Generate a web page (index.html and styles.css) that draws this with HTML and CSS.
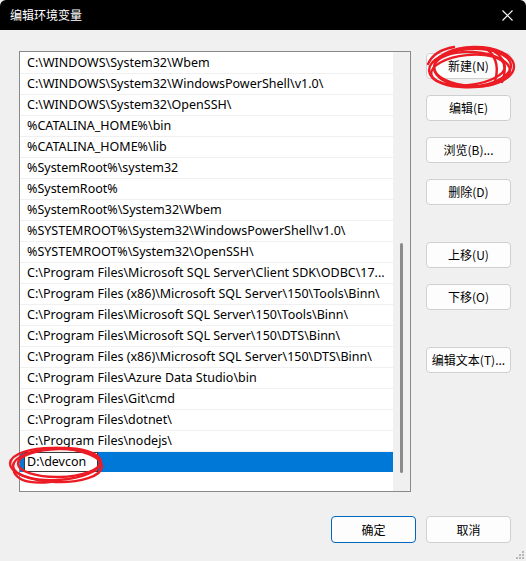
FILE: index.html
```html
<!DOCTYPE html>
<html lang="zh-CN">
<head>
<meta charset="utf-8">
<title>编辑环境变量</title>
<link rel="stylesheet" href="styles.css">
</head>
<body>
<div class="window">
  <div class="titlebar">
    <span class="title">编辑环境变量</span>
    <svg class="close" width="11" height="11" viewBox="0 0 11 11"><path d="M0.5 0.5 L10.5 10.5 M10.5 0.5 L0.5 10.5" stroke="#fff" stroke-width="1.1" fill="none"/></svg>
  </div>
  <div class="content">
    <div class="main">
      <div class="listbox">
        <div class="rows">
          <div class="row">C:\WINDOWS\System32\Wbem</div>
          <div class="row">C:\WINDOWS\System32\WindowsPowerShell\v1.0\</div>
          <div class="row">C:\WINDOWS\System32\OpenSSH\</div>
          <div class="row">%CATALINA_HOME%\bin</div>
          <div class="row">%CATALINA_HOME%\lib</div>
          <div class="row">%SystemRoot%\system32</div>
          <div class="row">%SystemRoot%</div>
          <div class="row">%SystemRoot%\System32\Wbem</div>
          <div class="row">%SYSTEMROOT%\System32\WindowsPowerShell\v1.0\</div>
          <div class="row">%SYSTEMROOT%\System32\OpenSSH\</div>
          <div class="row">C:\Program Files\Microsoft SQL Server\Client SDK\ODBC\17...</div>
          <div class="row">C:\Program Files (x86)\Microsoft SQL Server\150\Tools\Binn\</div>
          <div class="row">C:\Program Files\Microsoft SQL Server\150\Tools\Binn\</div>
          <div class="row">C:\Program Files\Microsoft SQL Server\150\DTS\Binn\</div>
          <div class="row">C:\Program Files (x86)\Microsoft SQL Server\150\DTS\Binn\</div>
          <div class="row">C:\Program Files\Azure Data Studio\bin</div>
          <div class="row">C:\Program Files\Git\cmd</div>
          <div class="row">C:\Program Files\dotnet\</div>
          <div class="row">C:\Program Files\nodejs\</div>
          <div class="row selected"><span class="edit">D:\devcon</span></div>
        </div>
        <div class="scrollbar"><div class="thumb"></div></div>
      </div>
      <div class="buttons">
        <div class="btn">新建(N)</div>
        <div class="btn">编辑(E)</div>
        <div class="btn">浏览(B)...</div>
        <div class="btn">删除(D)</div>
        <div class="btn group">上移(U)</div>
        <div class="btn">下移(O)</div>
        <div class="btn group">编辑文本(T)...</div>
      </div>
    </div>
    <div class="footer">
      <div class="btn primary">确定</div>
      <div class="btn">取消</div>
    </div>
  </div>
  <svg class="grip" width="9" height="9" viewBox="0 0 9 9">
    <rect x="6" y="0" width="2" height="2" fill="#b8b8b8"/>
    <rect x="3" y="3" width="2" height="2" fill="#b8b8b8"/>
    <rect x="6" y="3" width="2" height="2" fill="#b8b8b8"/>
    <rect x="0" y="6" width="2" height="2" fill="#b8b8b8"/>
    <rect x="3" y="6" width="2" height="2" fill="#b8b8b8"/>
    <rect x="6" y="6" width="2" height="2" fill="#b8b8b8"/>
  </svg>
  <svg class="marks" width="526" height="561" viewBox="0 0 526 561">
    <g fill="none" stroke="#ec1c24" stroke-width="2.4" stroke-linecap="round">
      <ellipse cx="470" cy="68" rx="41" ry="19" transform="rotate(-4 470 68)"/>
      <ellipse cx="472" cy="69" rx="38" ry="17" transform="rotate(3 472 69)"/>
      <ellipse cx="474" cy="67" rx="40" ry="20" transform="rotate(-1 474 67)"/>
      <ellipse cx="468" cy="70" rx="37" ry="15" transform="rotate(-6 468 70)"/>
      <path d="M428 64 C432 55 442 49 454 47"/>
      <path d="M494 51 C503 57 508 67 502 82"/>
      <path d="M488 50 C497 58 499 70 494 84"/>
      <ellipse cx="57" cy="464" rx="44" ry="16" transform="rotate(-3 57 464)"/>
      <ellipse cx="56" cy="465" rx="46" ry="17" transform="rotate(2 56 465)"/>
      <ellipse cx="59" cy="463" rx="41" ry="14" transform="rotate(-1 59 463)"/>
      <path d="M14 472 C18 481 30 484 50 482"/>
    </g>
  </svg>
</div>
</body>
</html>
```

FILE: styles.css
```css
* { box-sizing: border-box; }
html, body { margin: 0; padding: 0; }
body {
  width: 526px;
  height: 561px;
  overflow: hidden;
  font-family: "Noto Sans", "Noto Sans CJK SC", sans-serif;
  font-size: 12px;
  color: #000;
  background: #f0f0f0;
}
.window {
  position: relative;
  width: 526px;
  height: 561px;
  background: #f0f0f0;
}
.titlebar {
  height: 30px;
  background: #000;
  display: flex;
  align-items: center;
  justify-content: space-between;
  padding: 0 13px 0 10px;
  border-radius: 6px 6px 0 0;
}
.title {
  color: #fff;
  font-size: 12px;
  font-family: "Noto Sans CJK SC", sans-serif;
  line-height: 1;
}
.close { display: block; }
.content {
  padding: 21px 15px 0 19px;
}
.main {
  display: flex;
  gap: 15px;
}
.listbox {
  width: 392px;
  height: 441px;
  border: 1px solid #8a8a8a;
  background: #fff;
  display: flex;
}
.rows {
  flex: 1;
  display: flex;
  flex-direction: column;
  padding-top: 1px;
}
.row {
  height: 21px;
  border-bottom: 1px solid #f0f0f0;
  padding-left: 7px;
  display: flex;
  align-items: center;
  white-space: nowrap;
  overflow: hidden;
  line-height: 1;
  font-size: 12.5px;
}
.row.selected {
  background: #0078d7;
  border-bottom: none;
  padding-left: 4px;
  height: 20px;
}
.edit {
  background: #fff;
  border: 1px solid #3a3a3a;
  height: 20px;
  width: 74px;
  display: flex;
  align-items: center;
  padding-left: 2px;
}
.scrollbar {
  width: 17px;
  background: #f0f0f0;
  display: flex;
  justify-content: center;
  padding-top: 191px;
}
.thumb {
  width: 3px;
  height: 230px;
  background: #8b8b8b;
  border-radius: 2px;
}
.buttons {
  display: flex;
  flex-direction: column;
  gap: 16px;
  padding-top: 2px;
}
.btn {
  width: 85px;
  height: 26px;
  background: #fdfdfd;
  border: 1px solid #d0d0d0;
  border-radius: 4px;
  display: flex;
  align-items: center;
  justify-content: center;
  font-family: "Noto Sans CJK SC", sans-serif;
  font-size: 12px;
  line-height: 1;
}
.btn.group { margin-top: 21px; }
.footer {
  display: flex;
  justify-content: flex-end;
  gap: 10px;
  margin-top: 24px;
}
.footer .btn { height: 27px; }
.btn.primary { border-color: #0067c0; }
.grip {
  position: absolute;
  right: 1px;
  bottom: 1px;
}
.marks {
  position: absolute;
  left: 0;
  top: 0;
  pointer-events: none;
}
```
